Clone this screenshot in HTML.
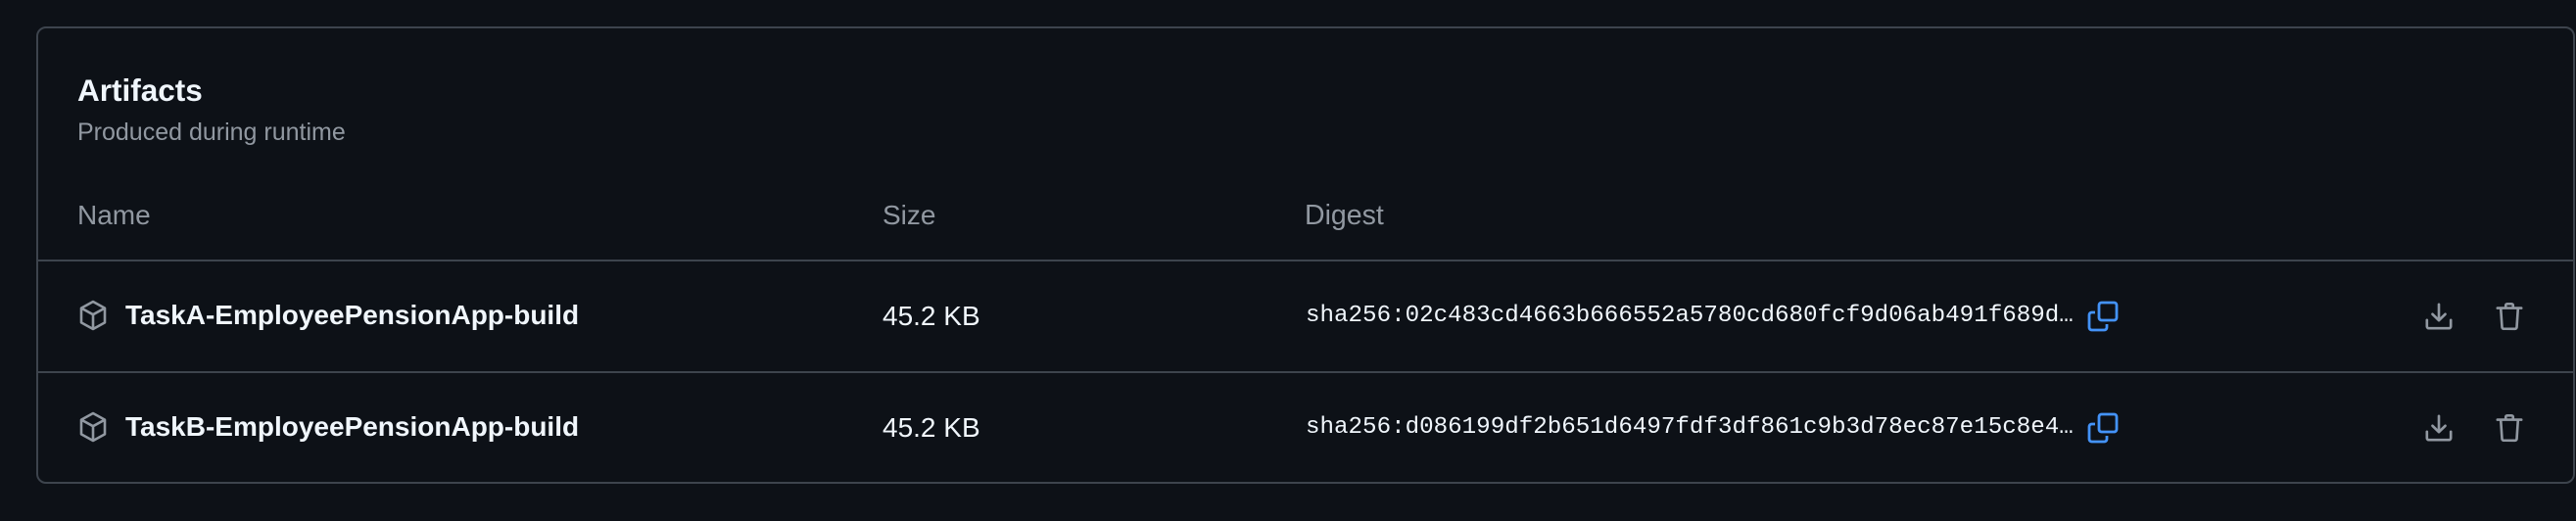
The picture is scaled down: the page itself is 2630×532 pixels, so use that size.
<!DOCTYPE html>
<html><head><meta charset="utf-8"><style>
html,body{margin:0;padding:0;background:#0d1117;width:2630px;height:532px;overflow:hidden;font-family:"Liberation Sans",sans-serif;color:#f0f6fc}
.box{position:absolute;left:37px;top:27px;width:2588px;height:463px;border:2px solid #3d444d;border-radius:10px;box-sizing:content-box}
.t{position:absolute;white-space:nowrap}
.hl{position:absolute;left:0;right:0;height:2px;background:#3d444d}
.mono{font-family:"Liberation Mono",monospace;font-size:24.2px;color:#f0f6fc}
</style></head><body>
<div class="box">
<div class="t" style="left:40px;top:45px;font-size:31.5px;font-weight:bold">Artifacts</div>
<div class="t" style="left:40px;top:92px;font-size:25px;color:#9198a1">Produced during runtime</div>
<div class="t" style="left:40px;top:175px;font-size:28px;color:#9198a1">Name</div>
<div class="t" style="left:862px;top:175px;font-size:28px;color:#9198a1">Size</div>
<div class="t" style="left:1293px;top:175px;font-size:28.5px;color:#9198a1">Digest</div>
<div class="hl" style="top:236px"></div>
<div class="hl" style="top:350px"></div>

<svg style="position:absolute;left:40px;top:276px" width="32" height="34" viewBox="0 0 16 16" fill="none" stroke="#9198a1" stroke-width="1.3" stroke-linejoin="round"><path d="M8 1 L14 4.3 V11.7 L8 15 L2 11.7 V4.3 Z M2 4.3 L8 7.6 L14 4.3 M8 7.6 V15"/></svg>
<div class="t" style="left:89px;top:277px;font-size:28px;font-weight:bold">TaskA-EmployeePensionApp-build</div>
<div class="t" style="left:862px;top:278px;font-size:28px">45.2 KB</div>
<div class="t mono" style="left:1294px;top:280px">sha256:02c483cd4663b666552a5780cd680fcf9d06ab491f689d…</div>
<svg style="position:absolute;left:2092px;top:278px" width="32" height="32" viewBox="0 0 16 16" fill="none" stroke="#4493f8" stroke-width="1.4" stroke-linejoin="round"><rect x="6" y="1" width="9" height="9" rx="1.3"/><path d="M4 6 H2.3 A1.3 1.3 0 0 0 1 7.3 V13.7 A1.3 1.3 0 0 0 2.3 15 H8.7 A1.3 1.3 0 0 0 10 13.7 V12"/></svg>
<svg style="position:absolute;left:2436px;top:279px" width="30" height="30" viewBox="0 0 16 16" fill="none" stroke="#9198a1" stroke-width="1.4" stroke-linecap="round" stroke-linejoin="round"><path d="M8 1.5 V10 M4.5 6.8 L8 10.2 L11.5 6.8 M1.5 10 V13.5 A1 1 0 0 0 2.5 14.5 H13.5 A1 1 0 0 0 14.5 13.5 V10"/></svg>
<svg style="position:absolute;left:2508px;top:278px" width="30" height="32" viewBox="0 0 16 16" fill="none" stroke="#9198a1" stroke-width="1.4" stroke-linecap="round" stroke-linejoin="round"><path d="M1.5 3.5 H14.5 M6 3.5 V2 A0.8 0.8 0 0 1 6.8 1.2 H9.2 A0.8 0.8 0 0 1 10 2 V3.5 M3.3 3.5 L4 14 A1 1 0 0 0 5 14.8 H11 A1 1 0 0 0 12 14 L12.7 3.5"/></svg>

<svg style="position:absolute;left:40px;top:390px" width="32" height="34" viewBox="0 0 16 16" fill="none" stroke="#9198a1" stroke-width="1.3" stroke-linejoin="round"><path d="M8 1 L14 4.3 V11.7 L8 15 L2 11.7 V4.3 Z M2 4.3 L8 7.6 L14 4.3 M8 7.6 V15"/></svg>
<div class="t" style="left:89px;top:391px;font-size:28px;font-weight:bold">TaskB-EmployeePensionApp-build</div>
<div class="t" style="left:862px;top:392px;font-size:28px">45.2 KB</div>
<div class="t mono" style="left:1294px;top:394px">sha256:d086199df2b651d6497fdf3df861c9b3d78ec87e15c8e4…</div>
<svg style="position:absolute;left:2092px;top:392px" width="32" height="32" viewBox="0 0 16 16" fill="none" stroke="#4493f8" stroke-width="1.4" stroke-linejoin="round"><rect x="6" y="1" width="9" height="9" rx="1.3"/><path d="M4 6 H2.3 A1.3 1.3 0 0 0 1 7.3 V13.7 A1.3 1.3 0 0 0 2.3 15 H8.7 A1.3 1.3 0 0 0 10 13.7 V12"/></svg>
<svg style="position:absolute;left:2436px;top:393px" width="30" height="30" viewBox="0 0 16 16" fill="none" stroke="#9198a1" stroke-width="1.4" stroke-linecap="round" stroke-linejoin="round"><path d="M8 1.5 V10 M4.5 6.8 L8 10.2 L11.5 6.8 M1.5 10 V13.5 A1 1 0 0 0 2.5 14.5 H13.5 A1 1 0 0 0 14.5 13.5 V10"/></svg>
<svg style="position:absolute;left:2508px;top:392px" width="30" height="32" viewBox="0 0 16 16" fill="none" stroke="#9198a1" stroke-width="1.4" stroke-linecap="round" stroke-linejoin="round"><path d="M1.5 3.5 H14.5 M6 3.5 V2 A0.8 0.8 0 0 1 6.8 1.2 H9.2 A0.8 0.8 0 0 1 10 2 V3.5 M3.3 3.5 L4 14 A1 1 0 0 0 5 14.8 H11 A1 1 0 0 0 12 14 L12.7 3.5"/></svg>
</div>
</body></html>
